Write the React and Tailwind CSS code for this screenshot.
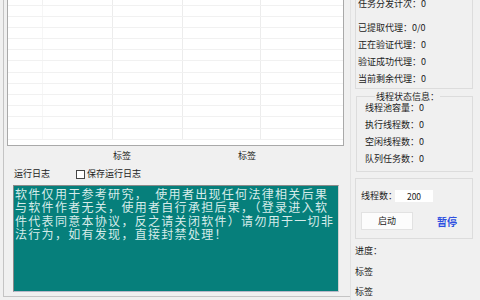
import React from 'react';

const font = { fontFamily: '"Noto Sans CJK SC", "Microsoft YaHei", sans-serif' };

const rows = Array.from({ length: 12 });

const logLines = [
    '软件仅用于参考研究，　使用者出现任何法律相关后果',
    '与软件作者无关，使用者自行承担后果，（登录进入软',
    '件代表同意本协议，反之请关闭软件）请勿用于一切非',
    '法行为，如有发现，直接封禁处理！',
];

const Row = ({ children, className = '' }) => (
    <div className={`h-[17px] leading-[17px] whitespace-nowrap ${className}`}>{children}</div>
);

const App = () => {
    return (
        <div className="w-[480px] h-[300px] bg-[#f0f0f0] flex overflow-hidden text-[9px] text-[#222]" style={font}>
            {/* left side */}
            <div className="w-[347px] h-[297px] ml-[3px] border-l border-b border-[#c4c4c4] flex flex-col">
                <div className="ml-[3px] w-[337px] h-[146px] bg-white border-x border-b border-[#a9a9a9] flex flex-col overflow-hidden">
                    <div className="h-[5.5px] border-b border-[#f1f1f1] grid grid-cols-[35px_70px_70px_78px_1fr] shrink-0">
                        <div className="border-r border-[#f1f1f1]"></div>
                        <div className="border-r border-[#ececec]"></div>
                        <div className="border-r border-[#ececec]"></div>
                        <div className="border-r border-[#ececec]"></div>
                        <div></div>
                    </div>
                    {rows.map((_, i) => (
                        <div key={i} className="h-[11.2px] border-b border-[#f1f1f1] grid grid-cols-[35px_70px_70px_78px_1fr] shrink-0">
                            <div className="border-r border-[#f6f6f6]"></div>
                            <div className="border-r border-[#ececec]"></div>
                            <div className="border-r border-[#ececec]"></div>
                            <div className="border-r border-[#ececec]"></div>
                            <div></div>
                        </div>
                    ))}
                </div>

                <div className="flex h-[17px] mt-[1px] leading-[17px]">
                    <span className="ml-[109px]">标签</span>
                    <span className="ml-[107px]">标签</span>
                </div>

                <div className="flex items-center h-[14px] mt-[3px] ml-[10px]">
                    <span>运行日志</span>
                    <span className="ml-[26px] w-[9px] h-[9px] border border-[#444] bg-white"></span>
                    <span className="ml-[2px]">保存运行日志</span>
                </div>

                <div className="ml-[9px] mt-[4px] w-[326px] h-[107px] border border-t-[#8a8a8a] border-l-[#8a8a8a] border-b-[#b8b8c8] border-r-[#d0d0d0] bg-[#067f7b] pt-[1px] pl-[1px] overflow-hidden">
                    {logLines.map((l, i) => (
                        <div key={i} className="text-[12px] leading-[13.4px] tracking-[1.3px] text-[#d6ecea] whitespace-nowrap">{l}</div>
                    ))}
                </div>
            </div>

            {/* right side */}
            <div className="flex-1 border-l border-[#e2e2e2] flex flex-col pl-[4px]">
                <div className="w-[118px] h-[89px] border-x border-b border-[#dcdcdc] pl-[2px] flex flex-col">
                    <Row className="-mt-[5.5px]">任务分发计次：0</Row>
                    <Row className="mt-[7px]">已提取代理：0/0</Row>
                    <Row>正在验证代理：0</Row>
                    <Row>验证成功代理：0</Row>
                    <Row>当前剩余代理：0</Row>
                </div>

                <div className="relative w-[117px] ml-[1px] mt-[7px] border border-[#dcdcdc] pt-[2px] pb-[4px] pl-[8px]">
                    <span className="absolute left-[18px] -top-[6px] h-[11px] leading-[11px] bg-[#f0f0f0] px-[1px] whitespace-nowrap">线程状态信息：</span>
                    <Row>线程池容量：0</Row>
                    <Row>执行线程数：0</Row>
                    <Row>空闲线程数：0</Row>
                    <Row>队列任务数：0</Row>
                </div>

                <div className="w-[118px] mt-[6px] border border-[#dcdcdc] pt-[11px] pb-[8px] pl-[5px] flex flex-col">
                    <div className="flex items-center h-[12px]">
                        <span className="w-[34px] shrink-0 whitespace-nowrap">线程数：</span>
                        <span className="w-[38px] h-[12px] shrink-0 bg-white text-center leading-[12px] text-[8.5px]">200</span>
                    </div>
                    <div className="flex items-center mt-[10px]">
                        <div className="w-[52px] h-[18px] bg-[#fcfcfc] border border-[#e2e2e2] flex items-center justify-center">启动</div>
                        <span className="ml-[24px] text-[#2d4fe0] text-[10px] font-bold">暂停</span>
                    </div>
                </div>

                <Row className="mt-[2.5px]">进度：</Row>
                <Row className="mt-[4px]">标签</Row>
                <Row className="mt-[3px]">标签</Row>
            </div>
        </div>
    );
};

export default App;
